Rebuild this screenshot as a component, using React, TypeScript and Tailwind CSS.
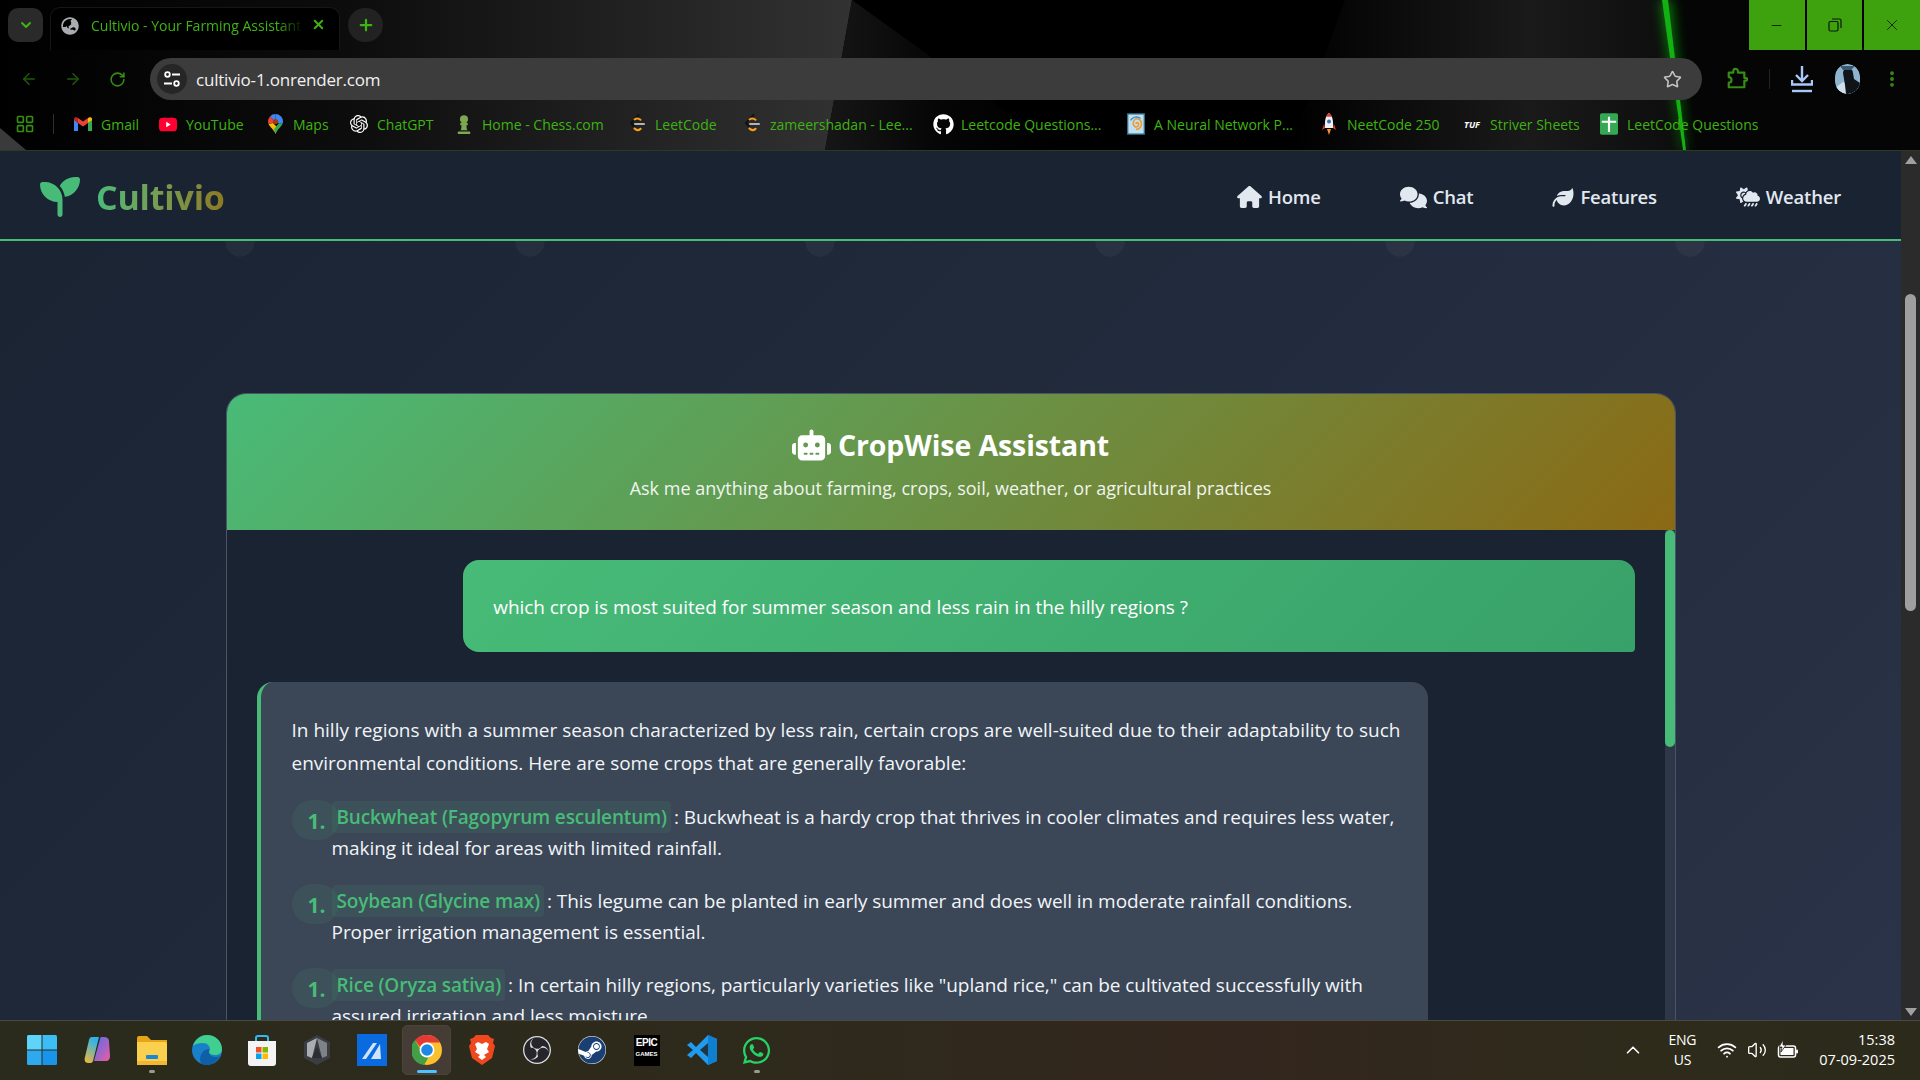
import {
  ArrowLeft,
  ArrowRight,
  RotateCw,
  Star,
  EllipsisVertical,
  ChevronDown,
  ChevronUp,
  Plus,
  X,
  Minus,
  LayoutGrid,
  Wifi,
  Volume2,
} from "lucide-react"
import { FaGlobeAsia, FaChessPawn, FaGithub, FaWhatsapp, FaSteam } from "react-icons/fa"
import { FaHouse, FaComments, FaLeaf, FaCloudSunRain, FaRobot, FaSeedling } from "react-icons/fa6"
import { SiOpenai, SiObsstudio } from "react-icons/si"

const SANS = "font-['Open_Sans','Noto_Sans',sans-serif]"

function Wallpaper() {
  return (
    <svg className="absolute inset-0 h-full w-full" viewBox="0 0 1920 150" preserveAspectRatio="none">
      <defs>
        <linearGradient id="wallLeft" x1="0" x2="1" y1="0" y2="0">
          <stop offset="0" stopColor="#000" />
          <stop offset="0.4" stopColor="#0c0c0c" />
          <stop offset="1" stopColor="#323232" />
        </linearGradient>
        <linearGradient id="wallMid" x1="0" x2="1" y1="0" y2="0">
          <stop offset="0" stopColor="#161616" />
          <stop offset="0.5" stopColor="#050505" />
          <stop offset="1" stopColor="#000" />
        </linearGradient>
        <linearGradient id="wallRight" x1="0" x2="1" y1="0" y2="0">
          <stop offset="0" stopColor="#000" />
          <stop offset="0.6" stopColor="#1a1a1a" />
          <stop offset="1" stopColor="#0c0c0c" />
        </linearGradient>
        <filter id="glow" x="-300%" width="700%">
          <feGaussianBlur stdDeviation="6" />
        </filter>
      </defs>
      <rect width="1920" height="150" fill="#000" />
      <polygon points="0,0 852,0 825,150 0,150" fill="url(#wallLeft)" />
      <polygon points="852,0 1060,150 825,150" fill="url(#wallMid)" />
      <polygon points="1345,0 1662,0 1690,150 1290,150" fill="url(#wallRight)" />
      <polygon points="1690,150 1662,0 1920,0 1920,150" fill="#050505" />
      <polygon points="0,128 26,150 0,150" fill="#3a3a3a" />
      <polygon points="1660,0 1672,0 1686,150 1682,150" fill="#10d010" filter="url(#glow)" opacity="0.55" />
      <polygon points="1662,0 1668,0 1686,150 1683,150" fill="#12b012" />
    </svg>
  )
}

const GmailIcon = () => (
  <svg width="18" height="14" viewBox="0 0 18 14">
    <path d="M0 2v12h4V6z" fill="#4285f4" />
    <path d="M18 2v12h-4V6z" fill="#34a853" />
    <path d="M4 6 9 9.6 14 6V1l-5 3.6L4 1z" fill="#ea4335" />
    <path d="M0 2c0-2 2.600-2.500 4-1v5L0 3z" fill="#c5221f" />
    <path d="M18 2c0-2-2.600-2.500-4-1v5l4-3z" fill="#fbbc04" />
  </svg>
)

const YoutubeIcon = () => (
  <svg width="20" height="15" viewBox="0 0 20 15">
    <rect width="20" height="15" rx="4" fill="#ff0033" />
    <path d="M8 4.500 13 7.500 8 10.500z" fill="#fff" />
  </svg>
)

const MapsIcon = () => (
  <svg width="15" height="20" viewBox="0 0 15 20">
    <path d="M7.500 0A7.500 7.500 0 0 0 2 2.400L7.500 8z" fill="#4285f4" />
    <path d="M7.500 0A7.500 7.500 0 0 1 15 7.500c0 1-.2 1.800-.6 2.600L7.500 8z" fill="#4285f4" />
    <path d="M2 2.400A7.500 7.500 0 0 0 0 7.500c0 1 .2 1.800.6 2.600L7.500 8z" fill="#ea4335" />
    <path d="M.6 10.100C2 13.500 6 15.500 7.500 20L10 14 5 9z" fill="#fbbc04" />
    <path d="M14.400 10.100C13 13.500 9 15.500 7.500 20L6 15l5-6z" fill="#34a853" />
    <circle cx="7.500" cy="7.500" r="2.600" fill="#a33a1c" />
  </svg>
)

const LeetcodeIcon = () => (
  <svg width="16" height="20" viewBox="0 0 16 20">
    <path d="M9.500 1 2 9l3.500 4" fill="none" stroke="#111" strokeWidth="2" strokeLinecap="round" />
    <path d="M5.500 14.500c2 2 4 2 6 .3" fill="none" stroke="#f89f1b" strokeWidth="2.200" strokeLinecap="round" />
    <path d="M5.500 5.500c2-1.500 4-1.300 6 .3" fill="none" stroke="#f89f1b" strokeWidth="2" strokeLinecap="round" />
    <path d="M6 10h9" stroke="#b3b3b3" strokeWidth="2" strokeLinecap="round" />
  </svg>
)

const SpiralIcon = () => (
  <svg width="20" height="24" viewBox="0 0 20 24">
    <rect width="20" height="24" fill="#2e6f86" />
    <rect x="1.500" y="1.500" width="17" height="21" fill="#bfe0f2" />
    <path d="M10 12c0-2 3-2 3 0s-2 4-4 3-3-4-1-7 7-2 8 2-2 8-6 8" fill="none" stroke="#ef9a2d" strokeWidth="1.800" />
    <path d="M4 8c2-4 8-5 11-2" fill="none" stroke="#3b8fd0" strokeWidth="1.500" />
  </svg>
)

const RocketIcon = () => (
  <svg width="14" height="22" viewBox="0 0 14 22">
    <path d="M3 15 0 17l2-6z" fill="#e23b2e" />
    <path d="M11 15l3 2-2-6z" fill="#e23b2e" />
    <path d="M7 0c3 2.500 4.500 6 4 15H3C2.500 6 4 2.500 7 0z" fill="#eef2f5" />
    <path d="M7 0c1.300 1 2.300 2.200 3 3.800H4C4.700 2.200 5.700 1 7 0z" fill="#e23b2e" />
    <circle cx="7" cy="8.500" r="2" fill="#3b6fb5" />
    <path d="M5 16h4l-2 6z" fill="#f59322" />
  </svg>
)

const SheetIcon = () => (
  <svg width="20" height="24" viewBox="0 0 20 24">
    <rect width="20" height="24" rx="2" fill="#34a853" />
    <path d="M2 9.500h16M10 4v17" stroke="#fff" strokeWidth="2.400" />
  </svg>
)

const SiteInfoIcon = () => (
  <svg width="18" height="18" viewBox="0 0 18 18" fill="none" stroke="#fff" strokeWidth="1.800">
    <circle cx="4.500" cy="4.500" r="2.300" />
    <path d="M9 4.500h8M1 13.500h8" />
    <circle cx="13.500" cy="13.500" r="2.300" />
  </svg>
)

const ExtensionIcon = () => (
  <svg width="22" height="24" viewBox="0 0 24 26" fill="none" stroke="#378c12" strokeWidth="2.400" strokeLinejoin="round">
    <path d="M3 6h5V4.500a2.500 2.500 0 0 1 5 0V6h7v6h1.500a1.500 1.500 0 0 1 0 3H20v7H3v-5a3 3 0 0 0 0-6z" />
  </svg>
)

const DownloadIcon = () => (
  <svg width="22" height="28" viewBox="0 0 22 28" fill="none" stroke="#a8c7fa" strokeWidth="2.400">
    <path d="M11 1v15M5 10l6 6 6-6" />
    <path d="M1 15v4.500h20V15" />
    <path d="M1 26h20" />
  </svg>
)

const AvatarIcon = () => (
  <svg width="25" height="30" viewBox="0 0 25 30" className="rounded-full">
    <rect width="25" height="30" fill="#8fb4d0" />
    <path d="M0 24 8 18l17 3v9H0z" fill="#cfe0ec" />
    <path d="M8 9a5 5 0 0 1 10 0l1 6 6 4v11H11l-1-9z" fill="#0f1418" />
    <path d="M5 2h15l-4 4H8z" fill="#3a5a74" />
  </svg>
)

const bookmarks = [
  { label: "Gmail", box: "w-[85px]", icon: <GmailIcon /> },
  { label: "YouTube", box: "w-[107px]", icon: <YoutubeIcon /> },
  { label: "Maps", box: "w-[84px]", icon: <MapsIcon /> },
  { label: "ChatGPT", box: "w-[105px]", icon: <SiOpenai className="h-[18px] w-[18px] shrink-0 text-white" /> },
  { label: "Home - Chess.com", box: "w-[173px]", icon: <FaChessPawn className="h-[20px] w-[18px] shrink-0 text-[#7fa650]" /> },
  { label: "LeetCode", box: "w-[115px]", icon: <LeetcodeIcon /> },
  { label: "zameershadan - Lee...", box: "w-[191px]", icon: <LeetcodeIcon /> },
  { label: "Leetcode Questions...", box: "w-[193px]", icon: <FaGithub className="h-[21px] w-[21px] shrink-0 text-white" /> },
  { label: "A Neural Network P...", box: "w-[193px]", icon: <SpiralIcon /> },
  { label: "NeetCode 250", box: "w-[143px]", icon: <RocketIcon /> },
  {
    label: "Striver Sheets",
    box: "w-[137px]",
    icon: <span className="text-[9px] font-bold italic leading-none text-white">TUF</span>,
  },
  { label: "LeetCode Questions", box: "w-[170px]", icon: <SheetIcon /> },
]

function BrowserChrome() {
  return (
    <header className={`relative h-[151px] shrink-0 overflow-hidden border-b border-[#2c3a20] ${SANS}`}>
      <Wallpaper />
      <div className="relative flex h-[58px] items-start">
        <div className="ml-2 mt-2 flex h-[34px] w-[35px] items-center justify-center rounded-[10px] bg-[#2a2a2a]">
          <ChevronDown className="h-4 w-4 text-[#3fb312]" strokeWidth={3} />
        </div>
        <div className="ml-[7px] mt-[7px] flex h-[43px] w-[290px] items-start rounded-t-[10px] border border-b-0 border-[#161616] bg-black pl-[10px] pt-[9px]">
          <FaGlobeAsia className="h-[18px] w-[18px] text-[#a9adb2]" />
          <span className="ml-3 w-[212px] overflow-hidden whitespace-nowrap text-[14px] leading-[18px] text-[#3fb312] [mask-image:linear-gradient(90deg,#000_88%,transparent)]">
            Cultivio - Your Farming Assistant
          </span>
          <X className="ml-[8px] h-[15px] w-[15px] text-[#3fb312]" strokeWidth={3} />
        </div>
        <div className="ml-2 mt-2 flex h-[34px] w-[35px] items-center justify-center rounded-full bg-[#222222]">
          <Plus className="h-[18px] w-[18px] text-[#3fb312]" strokeWidth={3} />
        </div>
        <div className="ml-auto flex h-[50px] w-[171px] gap-[2px] bg-black">
          <div className="flex flex-1 items-center justify-center bg-[#3ea10e]">
            <Minus className="h-[15px] w-[15px] text-[#0b1a05]" strokeWidth={1.5} />
          </div>
          <div className="flex flex-1 items-center justify-center bg-[#3ea10e]">
            <svg width="14" height="14" viewBox="0 0 14 14" fill="none" stroke="#0b1a05" strokeWidth="1.200">
              <rect x="1" y="3.500" width="9" height="9.500" rx="1.500" />
              <path d="M4 1h7.500A1.500 1.500 0 0 1 13 2.500V10" />
            </svg>
          </div>
          <div className="flex flex-1 items-center justify-center bg-[#3ea10e]">
            <X className="h-[18px] w-[18px] text-[#0b1a05]" strokeWidth={1.2} />
          </div>
        </div>
      </div>

      <div className="relative flex h-[42px] items-center">
        <ArrowLeft className="ml-5 h-[18px] w-[18px] text-[#1f5a0b]" />
        <ArrowRight className="ml-[26px] h-[18px] w-[18px] text-[#1f5a0b]" />
        <RotateCw className="ml-[27px] h-[17px] w-[17px] text-[#378c12]" strokeWidth={2.200} />
        <div className="ml-[24px] flex h-[42px] w-[1552px] items-center rounded-full bg-[#3c3c3c] pl-[7px] pr-5">
          <div className="flex h-[30px] w-[30px] items-center justify-center rounded-full bg-[#262626]">
            <SiteInfoIcon />
          </div>
          <span className="ml-[9px] mt-[1px] text-[17px] tracking-[-0.2px] text-[#f1f1f1]">cultivio-1.onrender.com</span>
          <Star className="ml-auto h-[19px] w-[19px] text-[#c4c4c4]" strokeWidth={2} />
        </div>
        <span className="ml-[24px] flex"><ExtensionIcon /></span>
        <div className="ml-[21px] h-5 w-px bg-[#222]" />
        <span className="ml-[21px] flex"><DownloadIcon /></span>
        <span className="ml-[22px] flex h-[30px] w-[25px] overflow-hidden rounded-full"><AvatarIcon /></span>
        <EllipsisVertical className="ml-[22px] h-[20px] w-[20px] text-[#378c12]" strokeWidth={2.600} />
      </div>

      <div className="relative flex h-[48px] items-center">
        <LayoutGrid className="ml-[15px] h-[20px] w-[20px] text-[#378c12]" strokeWidth={2} />
        <div className="ml-[18px] mr-5 h-5 w-px bg-[#2f2f2f]" />
        {bookmarks.map((b) => (
          <div key={b.label} className={`flex items-center ${b.box}`}>
            <span className="flex w-[18px] shrink-0 justify-center">{b.icon}</span>
            <span className="ml-[9px] whitespace-nowrap text-[14px] text-[#3fb312]">{b.label}</span>
          </div>
        ))}
      </div>
    </header>
  )
}

function NavBar() {
  const links = [
    { label: "Home", icon: <FaHouse className="h-[22px] w-[25px]" /> },
    { label: "Chat", icon: <FaComments className="h-[23px] w-[27px]" /> },
    { label: "Features", icon: <FaLeaf className="h-[21px] w-[22px]" /> },
    { label: "Weather", icon: <FaCloudSunRain className="h-[22px] w-[24px]" /> },
  ]
  return (
    <nav className="flex h-[90px] shrink-0 items-center justify-between border-b-2 border-[#48bb78] bg-[#1a2332] pl-[38px] pr-[60px] pt-[4px]">
      <div className="flex items-center gap-[14px]">
        <FaSeedling className="h-[40px] w-[44px] text-[#48bb78]" />
        <span className="bg-gradient-to-r from-[#48bb78] to-[#8b7a20] bg-clip-text text-[34px] font-bold tracking-[-0.2px] text-transparent">
          Cultivio
        </span>
      </div>
      <div className="flex items-center gap-[79px]">
        {links.map((l) => (
          <div key={l.label} className="flex items-center gap-[6px] text-[#e2e8f0]">
            {l.icon}
            <span className="text-[18.5px] font-semibold tracking-[-0.2px]">{l.label}</span>
          </div>
        ))}
      </div>
    </nav>
  )
}

const crops = [
  {
    name: "Buckwheat (Fagopyrum esculentum)",
    text: "Buckwheat is a hardy crop that thrives in cooler climates and requires less water, making it ideal for areas with limited rainfall.",
  },
  {
    name: "Soybean (Glycine max)",
    text: "This legume can be planted in early summer and does well in moderate rainfall conditions. Proper irrigation management is essential.",
  },
  {
    name: "Rice (Oryza sativa)",
    text: 'In certain hilly regions, particularly varieties like "upland rice," can be cultivated successfully with assured irrigation and less moisture.',
  },
]

function ChatCard() {
  return (
    <section className="mx-auto mt-[136px] w-[1450px] shrink-0 overflow-hidden rounded-t-[20px] border border-[#4a5568] bg-[#1a2332]">
      <div className="flex h-[136px] flex-col items-center bg-[linear-gradient(135deg,#48bb78,#8b6914)] pt-[31px]">
        <h1 className="flex items-center gap-[7px] text-[28.5px] font-bold leading-[40px] tracking-[-0.1px] text-white">
          <FaRobot className="h-[32px] w-[39px]" />
          CropWise Assistant
        </h1>
        <p className="mt-[9px] text-[18px] leading-[28px] text-[#f0f5ee]">
          Ask me anything about farming, crops, soil, weather, or agricultural practices
        </p>
      </div>
      <div className="flex h-[520px]">
        <div className="flex min-w-0 flex-1 flex-col gap-[30px] p-[30px]">
          <div className="ml-auto flex h-[92px] w-[85%] shrink-0 items-center rounded-[16px] rounded-br-[4px] bg-[linear-gradient(135deg,#48bb78,#38a169)] px-[30px] pt-[2px]">
            <p className="text-[19px] tracking-[-0.05px] text-white">
              which crop is most suited for summer season and less rain in the hilly regions ?
            </p>
          </div>
          <div className="w-[85%] shrink-0 rounded-[16px] border-l-4 border-[#48bb78] bg-[#3b4656] pb-[30px] pl-[31px] pr-[20px] pt-[32px] text-[19px] text-[#f1f5f9]">
            <p className="leading-[33px]">
              In hilly regions with a summer season characterized by less rain, certain crops are well-suited due to
              their adaptability to such environmental conditions. Here are some crops that are generally favorable:
            </p>
            <ol className="mt-[22px] flex flex-col gap-[22px]">
              {crops.map((c) => (
                <li key={c.name} className="flex leading-[31px] tracking-[-0.05px]">
                  <span className="relative h-10 w-10 shrink-0">
                    <span className="absolute left-0 top-[-2px] h-10 w-[47px] rounded-full bg-[#48bb78]/10" />
                    <span className="absolute left-[16px] top-[4px] text-[21px] font-bold text-[#48bb78]">1.</span>
                  </span>
                  <p className="min-w-0 flex-1">
                    <strong className="rounded-[4px] bg-[#48bb78]/10 py-[3px] pl-[5px] pr-[4px] font-semibold tracking-[-0.15px] text-[#48bb78]">
                      {c.name}
                    </strong>
                    <span className="ml-[3px]">: {c.text}</span>
                  </p>
                </li>
              ))}
            </ol>
          </div>
        </div>
        <div className="w-[10px] shrink-0 bg-[#2d3748]">
          <div className="h-[217px] w-full rounded-full bg-[#48bb78]" />
        </div>
      </div>
    </section>
  )
}

function PageScrollbar() {
  return (
    <div className="flex w-[19px] shrink-0 flex-col items-center justify-between bg-[#2b2b2b] pb-[4px] pt-[5px]">
      <div className="h-0 w-0 border-x-[6px] border-b-[8px] border-x-transparent border-b-[#a0a0a0]" />
      <div className="absolute right-[4px] top-[143px] h-[317px] w-[11px] rounded-full bg-[#9f9f9f]" />
      <div className="h-0 w-0 border-x-[6px] border-t-[8px] border-x-transparent border-t-[#a0a0a0]" />
    </div>
  )
}

const WinLogo = () => (
  <svg width="30" height="30" viewBox="0 0 30 30">
    <path d="M0 1.500A1.500 1.500 0 0 1 1.500 0h13v14.500H0z" fill="#5fd4fb" />
    <path d="M15.500 0h13A1.500 1.500 0 0 1 30 1.500v13H15.500z" fill="#3cbdf5" />
    <path d="M0 15.500h14.500V30h-13A1.500 1.500 0 0 1 0 28.500z" fill="#2ea9f0" />
    <path d="M15.500 15.500H30v13a1.500 1.500 0 0 1-1.500 1.500h-13z" fill="#1a94ea" />
  </svg>
)

const CopilotLogo = () => (
  <svg width="30" height="30" viewBox="0 0 30 30">
    <defs>
      <linearGradient id="copA" x1="0" y1="1" x2="0.4" y2="0">
        <stop offset="0" stopColor="#f7b733" />
        <stop offset="1" stopColor="#2fb4e8" />
      </linearGradient>
      <linearGradient id="copB" x1="0" y1="0" x2="1" y2="1">
        <stop offset="0" stopColor="#4c6ff0" />
        <stop offset="1" stopColor="#ef5ba1" />
      </linearGradient>
    </defs>
    <path d="M10 2h7l-6 24c-.4 1.500-1.500 2-3 2H6c-3 0-4-3-3-6L7 5c.4-2 1.500-3 3-3z" fill="url(#copA)" />
    <path d="M19 2h3c3 0 4.500 1 5 4l1 15c.2 3-1.500 5-4 5H12l6-22c.2-1 .5-2 1-2z" fill="url(#copB)" />
  </svg>
)

const FolderLogo = () => (
  <svg width="30" height="30" viewBox="0 0 30 30">
    <path d="M0 3a2 2 0 0 1 2-2h8l4 4h16v4H0z" fill="#e8a417" />
    <path d="M0 7h28a2 2 0 0 1 2 2v19a2 2 0 0 1-2 2H2a2 2 0 0 1-2-2z" fill="#fcd04f" />
    <rect x="9" y="20" width="12" height="4" rx="1" fill="#1b86d6" />
    <rect x="0" y="26" width="30" height="4" fill="#f2b632" />
  </svg>
)

const EdgeLogo = () => (
  <svg width="30" height="30" viewBox="0 0 30 30">
    <circle cx="15" cy="15" r="15" fill="#1a7fc9" />
    <path d="M1 11C3 4 9 0 15 0c8 0 15 6 15 14 0 4-3 6-7 6-3 0-6-1-6-3 0-1 1-1 1-3 0-3-3-6-7-6-5 0-8 1-10 3z" fill="#41cf8f" />
    <path d="M12 30C5 28 8 15 16 14c1 0 1 1 1 3 0 3 3 5 7 5 1.500 0 3-.4 4-1-3 6-9 10-16 9z" fill="#0f5fa6" />
  </svg>
)

const StoreLogo = () => (
  <svg width="30" height="32" viewBox="0 0 30 32">
    <path d="M9 7V4a2 2 0 0 1 2-2h8a2 2 0 0 1 2 2v3" fill="none" stroke="#35b8f0" strokeWidth="2" />
    <path d="M1 7h28v22a3 3 0 0 1-3 3H4a3 3 0 0 1-3-3z" fill="#f4f4f4" />
    <rect x="9" y="13" width="5.500" height="5.500" fill="#f25022" />
    <rect x="15.500" y="13" width="5.500" height="5.500" fill="#7fba00" />
    <rect x="9" y="19.500" width="5.500" height="5.500" fill="#00a4ef" />
    <rect x="15.500" y="19.500" width="5.500" height="5.500" fill="#ffb900" />
  </svg>
)

const HexLogo = () => (
  <svg width="26" height="30" viewBox="0 0 26 30">
    <path d="M13 0 26 7v16l-13 7L0 23V7z" fill="#3a3d42" />
    <path d="M13 3 23 8v13l-5 2z" fill="#7e8388" />
    <path d="M13 3 3 8v13l5 2z" fill="#a9aeb3" />
    <path d="M13 12 18 23H8z" fill="#2b2e33" />
  </svg>
)

const SlashLogo = () => (
  <svg width="30" height="32" viewBox="0 0 30 32">
    <rect width="30" height="32" fill="#0a6be0" />
    <path d="M5 25 16 9h4L9 25zM14 25 23 10l1 15z" fill="#cfe4fb" />
  </svg>
)

const ChromeLogo = () => (
  <svg width="30" height="30" viewBox="0 0 30 30">
    <circle cx="15" cy="15" r="15" fill="#fbc02d" />
    <path d="M15 0a15 15 0 0 1 13 7.500H15A7.500 7.500 0 0 0 8 12L3 5A15 15 0 0 1 15 0z" fill="#e53935" />
    <path d="M3 5l6.500 11.500a7.500 7.500 0 0 0 7 6L12 30A15 15 0 0 1 3 5z" fill="#43a047" />
    <circle cx="15" cy="15" r="7.500" fill="#fff" />
    <circle cx="15" cy="15" r="5.800" fill="#1e88e5" />
  </svg>
)

const BraveLogo = () => (
  <svg width="26" height="30" viewBox="0 0 26 30">
    <path d="M7 0h12l3 3 3 1-1 4 2 3-3 12-10 7-10-7L0 11l2-3-1-4 3-1z" fill="#f0481e" />
    <path d="M13 9 9 7 6 9l2 5-2 3 5 3-2 2 4 3 4-3-2-2 5-3-2-3 2-5-3-2z" fill="#fff" />
  </svg>
)

const VscodeLogo = () => (
  <svg width="30" height="30" viewBox="0 0 30 30">
    <path d="M21 0 30 4v22l-9 4L9 18l-5 5-4-3 6-5-6-5 4-3 5 5z" fill="#1f9cf0" />
    <path d="M21 8v14l-8-7z" fill="#222" opacity="0.85" />
    <path d="M21 0 30 4v22l-9 4z" fill="#0f7fd0" />
  </svg>
)

const BatteryIcon = () => (
  <svg width="22" height="20" viewBox="0 0 22 20">
    <rect x="1.500" y="6" width="17" height="11" rx="2" fill="none" stroke="#fff" strokeWidth="1.500" />
    <rect x="3.500" y="8" width="13" height="7" fill="#fff" />
    <rect x="19" y="9.500" width="2" height="4" rx="1" fill="#fff" />
    <path d="M6 0 2 7h3l-1 5 5-7H6z" fill="#fff" stroke="#2e2b1b" strokeWidth="0.800" />
  </svg>
)

const taskbarIcons = [
  { id: "start", icon: <WinLogo /> },
  { id: "copilot", icon: <CopilotLogo /> },
  { id: "files", icon: <FolderLogo />, dot: true },
  { id: "edge", icon: <EdgeLogo /> },
  { id: "store", icon: <StoreLogo /> },
  { id: "hex", icon: <HexLogo /> },
  { id: "slash", icon: <SlashLogo /> },
  { id: "chrome", icon: <ChromeLogo />, active: true },
  { id: "brave", icon: <BraveLogo /> },
  {
    id: "obs",
    icon: (
      <span className="flex h-[28px] w-[28px] rounded-full bg-[#25252b]">
        <SiObsstudio className="h-[28px] w-[28px] text-[#dddddd]" />
      </span>
    ),
  },
  {
    id: "steam",
    icon: (
      <span className="flex h-[28px] w-[28px] rounded-full bg-white">
        <FaSteam className="h-[28px] w-[28px] text-[#1a3f73]" />
      </span>
    ),
  },
  {
    id: "epic",
    icon: (
      <span className="flex h-[31px] w-[26px] flex-col items-center bg-black pt-[3px] font-['Liberation_Sans',sans-serif] font-bold leading-none text-white">
        <span className="text-[10px] tracking-[-0.4px]">EPIC</span>
        <span className="mt-[3px] text-[6px]">GAMES</span>
      </span>
    ),
  },
  { id: "vscode", icon: <VscodeLogo /> },
  { id: "whatsapp", icon: <FaWhatsapp className="h-[31px] w-[31px] text-[#25d366]" />, dot: true },
]

function Taskbar() {
  return (
    <footer className="flex h-[60px] shrink-0 items-center border-t border-[#4b4a40] bg-[linear-gradient(90deg,#2a2b1c,#2e2a1c_40%,#33261e_65%,#2e2b1b_85%,#2b2a1b)] pb-[1px] pl-[14px] pr-[25px] font-['Open_Sans',sans-serif] text-white">
      {taskbarIcons.map((t) => (
        <div key={t.id} className="relative flex h-[50px] w-[55px] items-center justify-center">
          {t.active && <div className="absolute inset-x-[3px] inset-y-0 rounded-[5px] border border-[#4a443a] bg-[#453d35]" />}
          <div className="relative flex items-center justify-center">{t.icon}</div>
          {t.active && <div className="absolute bottom-[2px] h-[3px] w-[20px] rounded-full bg-[#4cc2ff]" />}
          {t.dot && <div className="absolute bottom-[2px] h-[3px] w-[6px] rounded-full bg-[#9a9a90]" />}
        </div>
      ))}
      <ChevronUp className="ml-auto h-[22px] w-[22px]" strokeWidth={1.8} />
      <div className="ml-[24px] flex flex-col items-center text-[14px] leading-[20px] tracking-[-0.2px]">
        <span>ENG</span>
        <span>US</span>
      </div>
      <Wifi className="ml-[21px] h-[20px] w-[20px]" strokeWidth={2.200} />
      <Volume2 className="ml-[10px] h-[20px] w-[20px]" strokeWidth={1.6} />
      <span className="ml-[10px] flex"><BatteryIcon /></span>
      <div className="ml-[20px] flex flex-col items-end text-[14.5px] leading-[20px]">
        <span>15:38</span>
        <span>07-09-2025</span>
      </div>
    </footer>
  )
}

export default function App() {
  return (
    <div className={`flex h-screen w-screen flex-col overflow-hidden bg-black ${SANS}`}>
      <BrowserChrome />
      <div className="relative flex min-h-0 flex-1 overflow-hidden">
        <main className="flex min-w-0 flex-1 flex-col overflow-hidden bg-[linear-gradient(135deg,#1a2332,#2a3347)]">
          <NavBar />
          {/* faint scallops hanging off the navbar line */}
          <div className="h-4 shrink-0 bg-[radial-gradient(ellipse_15px_16px_at_145px_0,rgba(255,255,255,0.035)_96%,transparent_100%)] bg-[length:290px_16px] bg-[position:95px_0] bg-repeat-x" />
          <ChatCard />
        </main>
        <PageScrollbar />
      </div>
      <Taskbar />
    </div>
  )
}
